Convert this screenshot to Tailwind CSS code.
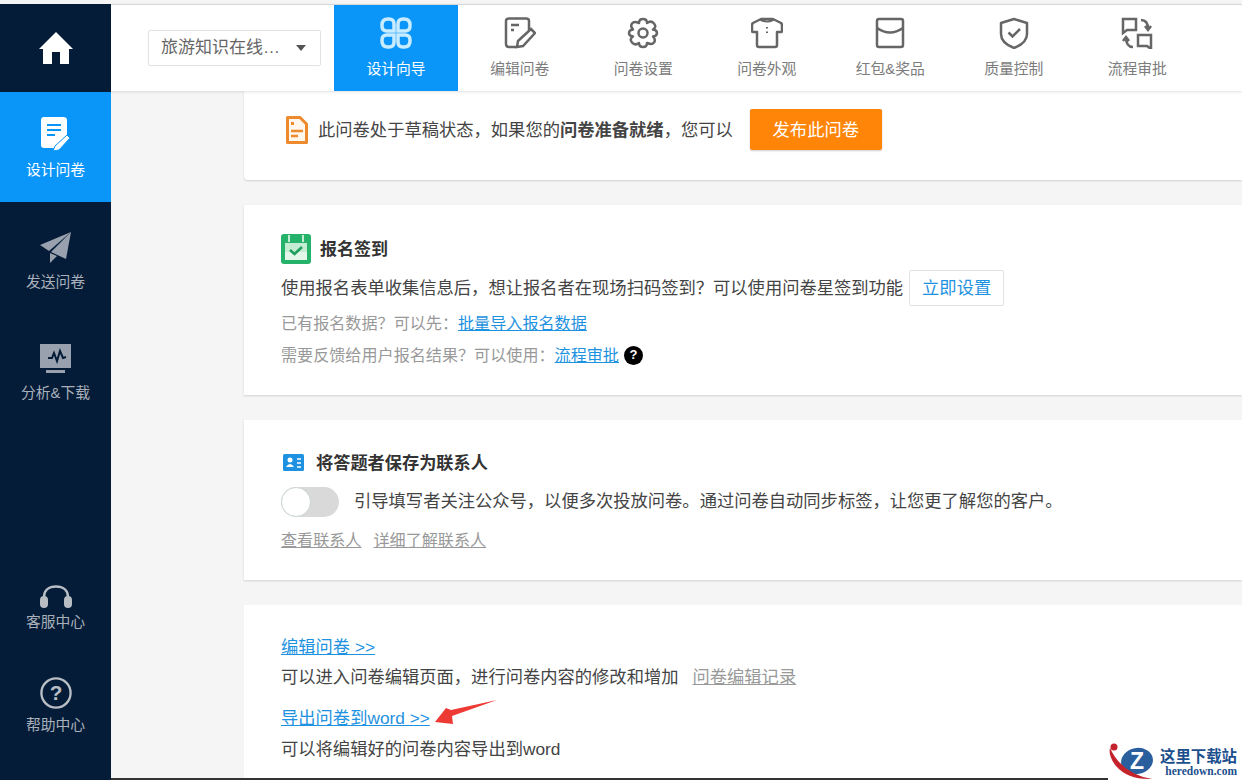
<!DOCTYPE html>
<html lang="zh-CN">
<head>
    <meta charset="UTF-8">
    <title>设计向导</title>
    <script src="https://cdn.jsdelivr.net/npm/@tailwindcss/browser@4"></script>
</head>
<body class="bg-[#f5f5f5] font-['Liberation_Sans','Noto_Sans_CJK_SC',sans-serif]">
<div class="relative w-[1242px] h-[780px] overflow-hidden pt-[4px] flex">

    <!-- Sidebar -->
    <aside class="w-[111px] h-[776px] shrink-0 bg-[#041c38] flex flex-col text-[14.8px] text-[#a9b0ba]">
        <div class="h-[88px] flex items-center justify-center">
            <svg width="34" height="34" viewBox="0 0 34 34" fill="#fff"><path d="M17 1 L34 18 L30 18 L30 33 L21 33 L21 21 L13 21 L13 33 L4 33 L4 18 L0 18 Z"/></svg>
        </div>
        <div class="h-[110px] bg-[#0a95f9] text-white flex flex-col items-center pt-[25px]">
            <svg width="30" height="35" viewBox="0 0 30 35">
                <path d="M3 0H22Q26 0 26 3V20L15 31H3Q0 31 0 28V3Q0 0 3 0Z" fill="#fff"/>
                <path d="M6 8H20M6 13H20M6 18H14" stroke="#0a95f9" stroke-width="2"/>
                <path d="M26 18L29 21L18 33L12 34L14 29Z" fill="#fff" stroke="#0a95f9" stroke-width="1"/>
            </svg>
            <span class="mt-[8px] leading-[20px]">设计问卷</span>
        </div>
        <div class="h-[111px] flex flex-col items-center pt-[30px]">
            <svg width="32" height="32" viewBox="0 0 32 32" fill="#98a1ad">
                <path d="M31 0L0 13L9 19L31 0Z"/><path d="M31 0L11 20L26 27L31 0Z"/><path d="M10 21L10 31L17 24Z"/>
            </svg>
            <span class="mt-[8px] leading-[20px]">发送问卷</span>
        </div>
        <div class="h-[111px] flex flex-col items-center pt-[31px]">
            <svg width="32" height="30" viewBox="0 0 32 30">
                <rect x="0" y="0" width="31" height="24" fill="#98a1ad"/>
                <rect x="6" y="26" width="19" height="3" fill="#98a1ad"/>
                <path d="M8 14L12 14L14 9L17 17L20 7L23 14L26 13" fill="none" stroke="#041c38" stroke-width="2"/>
            </svg>
            <span class="mt-[9px] leading-[20px]">分析&amp;下载</span>
        </div>
        <div class="flex-1"></div>
        <div class="h-[92px] flex flex-col items-center">
            <svg width="32" height="24" viewBox="0 0 32 24" fill="#b9bec5">
                <path d="M4 15V12C4 5 9 1.500 16 1.500S28 5 28 12V15" fill="none" stroke="#b9bec5" stroke-width="2.500"/>
                <rect x="0" y="11" width="8" height="12" rx="4"/><rect x="24" y="11" width="8" height="12" rx="4"/>
            </svg>
            <span class="mt-[3px] leading-[20px]">客服中心</span>
        </div>
        <div class="h-[103px] flex flex-col items-center">
            <svg width="32" height="32" viewBox="0 0 34 34">
                <circle cx="17" cy="17" r="15.500" fill="none" stroke="#b9bec5" stroke-width="2.500"/>
                <text x="17" y="24.500" text-anchor="middle" font-size="22" font-weight="700" fill="#b9bec5" font-family="Liberation Sans">?</text>
            </svg>
            <span class="mt-[6px] leading-[20px]">帮助中心</span>
        </div>
    </aside>

    <!-- Right part -->
    <div class="flex-1 min-w-0 flex flex-col">
        <header class="relative z-10 h-[87px] shrink-0 bg-white border-t border-[#d8d8d8] shadow-[0_1px_3px_rgba(0,0,0,0.12)] flex">
            <div class="w-[223px] shrink-0 pl-[37px] pt-[25px]">
                <div class="w-[173px] h-[36px] border border-[#e3e3e3] rounded-[2px] shadow-[0_0_2px_rgba(0,0,0,0.06)] flex items-center pl-[12px] text-[17px] text-[#666]">
                    <span class="whitespace-nowrap">旅游知识在线…</span>
                    <span class="ml-[16px] w-0 h-0 border-x-[5px] border-x-transparent border-t-[6px] border-t-[#555]"></span>
                </div>
            </div>
            <nav class="flex text-[14.8px] text-[#7c7c7c]">
                <a class="w-[124px] bg-[#0a95f9] text-white flex flex-col items-center pt-[12px]">
                    <svg width="32" height="32" viewBox="0 0 32 32" fill="none" stroke="#c8ecff" stroke-width="3.500">
                        <path d="M8 2H9Q14 2 14 7V14H7Q2 14 2 9V8Q2 2 8 2Z"/>
                        <path d="M24 2H23Q18 2 18 7V14H25Q30 14 30 9V8Q30 2 24 2Z"/>
                        <path d="M8 30H9Q14 30 14 25V18H7Q2 18 2 23V24Q2 30 8 30Z"/>
                        <path d="M24 30H23Q18 30 18 25V18H25Q30 18 30 23V24Q30 30 24 30Z"/>
                    </svg>
                    <span class="mt-[10px] leading-[20px]">设计向导</span>
                </a>
                <a class="w-[123.500px] flex flex-col items-center pt-[12px]">
                    <svg width="32" height="32" viewBox="0 0 32 32" fill="none" stroke="#666" stroke-width="2.500">
                        <path d="M12 30H5Q2 30 2 27V4Q2 1.500 5 1.500H22Q25 1.500 25 4V13"/>
                        <path d="M7 8H15M7 13H10"/>
                        <path d="M27 12L31 16L19 29L13 30L14 24Z"/>
                    </svg>
                    <span class="mt-[10px] leading-[20px]">编辑问卷</span>
                </a>
                <a class="w-[123.500px] flex flex-col items-center pt-[12px]">
                    <svg width="32" height="32" viewBox="0 0 32 32" fill="none" stroke="#666" stroke-width="2.500" stroke-linejoin="round">
                        <path d="M12 6Q12 2 16 2T20 6Q24 3 27 6.500T26 12.500Q30 13 30 16T26 19.500Q29 23 27 25.500T20 26Q20 30 16 30T12 26Q8 29 5 25.500T6 19.500Q2 19 2 16T6 12.500Q3 9 5 6.500T12 6Z"/>
                        <circle cx="16" cy="16" r="4.500"/>
                    </svg>
                    <span class="mt-[10px] leading-[20px]">问卷设置</span>
                </a>
                <a class="w-[123.500px] flex flex-col items-center pt-[12px]">
                    <svg width="32" height="32" viewBox="0 0 32 32" fill="none" stroke="#666" stroke-width="2.500" stroke-linejoin="round">
                        <path d="M10 2H22L30 6Q31 7 31 8V14Q31 15 30 15H26V28Q26 30 24 30H8Q6 30 6 28V15H2Q1 15 1 14V8Q1 7 2 6Z"/>
                        <path d="M10 2V3Q16 6 22 3V2" stroke-width="2"/>
                        <path d="M16 10V11.500M16 14.500V16" stroke-width="2"/>
                    </svg>
                    <span class="mt-[10px] leading-[20px]">问卷外观</span>
                </a>
                <a class="w-[123.500px] flex flex-col items-center pt-[12px]">
                    <svg width="32" height="32" viewBox="0 0 32 32" fill="none" stroke="#666" stroke-width="2.500">
                        <rect x="3" y="2" width="26" height="28" rx="2"/>
                        <path d="M3 11Q16 20 29 11"/>
                    </svg>
                    <span class="mt-[10px] leading-[20px]">红包&amp;奖品</span>
                </a>
                <a class="w-[123.500px] flex flex-col items-center pt-[12px]">
                    <svg width="32" height="32" viewBox="0 0 32 32" fill="none" stroke="#666" stroke-width="2.500">
                        <path d="M16 2L29 6V17Q29 26 16 31Q3 26 3 17V6Z" stroke-linejoin="round"/>
                        <path d="M10.500 15.500L14.500 19.500L22 12"/>
                    </svg>
                    <span class="mt-[10px] leading-[20px]">质量控制</span>
                </a>
                <a class="w-[123.500px] flex flex-col items-center pt-[12px]">
                    <svg width="32" height="32" viewBox="0 0 32 32" fill="none" stroke="#666" stroke-width="2.500">
                        <path d="M2 2H15V13H6L2 16Z"/>
                        <path d="M30 18H17V29H26L30 32Z"/>
                        <path d="M20 3Q27 3 27 12M24 9L27 13L30 9"/>
                        <path d="M12 30Q5 30 5 20M2 24L5 20L8 24"/>
                    </svg>
                    <span class="mt-[10px] leading-[20px]">流程审批</span>
                </a>
            </nav>
        </header>

        <main class="flex-1 min-h-0 pl-[133px] flex flex-col gap-[25px] border-b-2 border-[#333] text-[17.300px] text-[#444]">
            <!-- draft -->
            <section class="h-[89px] shrink-0 bg-white rounded-bl-[4px] shadow-[0_1px_2px_rgba(0,0,0,0.15)] pl-[42px] pt-[18px] flex items-start">
                <svg class="mt-[7px]" width="22" height="28" viewBox="0 0 22 28">
                    <path d="M1.500 1.500H14L20.500 8V26.500H1.500Z" fill="#fff6ec" stroke="#ee8a2e" stroke-width="3" stroke-linejoin="round"/>
                    <path d="M5 15H17M5 20H12" stroke="#ee8a2e" stroke-width="2.500"/><rect x="5" y="6" width="3" height="3" fill="#ee8a2e"/>
                </svg>
                <p class="ml-[10px] pt-[1px] leading-[41px]">此问卷处于草稿状态，如果您的<b class="font-bold">问卷准备就绪</b>，您可以</p>
                <button class="ml-[17px] w-[132px] h-[41px] pt-[2px] bg-[#ff8508] rounded-[2px] text-white text-[17.300px] shadow-[0_1px_2px_rgba(0,0,0,0.2)]">发布此问卷</button>
            </section>

            <!-- sign in -->
            <section class="h-[190px] shrink-0 bg-white shadow-[0_1px_2px_rgba(0,0,0,0.15)] pl-[37px] pt-[29px]">
                <div class="flex items-center h-[29px]">
                    <svg width="30" height="30" viewBox="0 0 30 30">
                        <rect width="30" height="30" rx="3" fill="#25b36b"/>
                        <rect x="4" y="9" width="22" height="17" fill="#c4ecd3"/>
                        <rect x="4" y="18" width="22" height="8" fill="#e3f6ea"/>
                        <path d="M8 1V8M22 1V8" stroke="#c4ecd3" stroke-width="2"/>
                        <path d="M9 16L13.500 20L21 13" fill="none" stroke="#1d9f5c" stroke-width="2.500"/>
                    </svg>
                    <h2 class="ml-[9px] pt-[2px] font-bold text-[#333] text-[17px]">报名签到</h2>
                </div>
                <div class="flex items-center mt-[7px] h-[36px]">
                    <span class="pt-[2px]">使用报名表单收集信息后，想让报名者在现场扫码签到？可以使用问卷星签到功能</span>
                    <a class="ml-[6px] w-[95px] h-[36px] pt-[2px] border border-[#e3e3e3] rounded-[2px] flex items-center justify-center text-[#1e92e0]">立即设置</a>
                </div>
                <p class="mt-[1px] leading-[32px] text-[16.100px] text-[#999]">已有报名数据？可以先：<a class="text-[#1e92e0] underline">批量导入报名数据</a></p>
                <p class="leading-[32px] text-[16.100px] text-[#999] flex items-center">需要反馈给用户报名结果？可以使用：<a class="text-[#1e92e0] underline">流程审批</a>
                    <span class="ml-[5px] w-[19px] h-[19px] rounded-full bg-black text-white text-[13px] font-bold flex items-center justify-center">?</span>
                </p>
            </section>

            <!-- contacts -->
            <section class="h-[160px] shrink-0 bg-white shadow-[0_1px_2px_rgba(0,0,0,0.15)] pl-[37px] pt-[30px]">
                <div class="flex items-center h-[24px]">
                    <svg class="ml-[2px]" width="21" height="17" viewBox="0 0 21 17">
                        <rect width="21" height="17" rx="1.500" fill="#1e92e0"/>
                        <circle cx="7" cy="6" r="2.500" fill="#fff"/><path d="M3 13Q7 7 11 13Z" fill="#fff"/>
                        <path d="M14 5H18M14 9H18M14 13H18" stroke="#fff" stroke-width="1.500"/>
                    </svg>
                    <h2 class="ml-[12px] pt-[3px] font-bold text-[#333] text-[17.200px]">将答题者保存为联系人</h2>
                </div>
                <div class="flex items-center mt-[13px] h-[30px]">
                    <span class="relative w-[58px] h-[30px] rounded-full bg-[#d9d9d9]">
                        <span class="absolute left-0 top-0 w-[30px] h-[30px] rounded-full bg-white border border-[#ccd5d8]"></span>
                    </span>
                    <span class="ml-[15px]">引导填写者关注公众号，以便多次投放问卷。通过问卷自动同步标签，让您更了解您的客户。</span>
                </div>
                <p class="mt-[7px] leading-[32px] text-[16.100px] text-[#999] flex gap-[12px]"><a class="underline">查看联系人</a><a class="underline">详细了解联系人</a></p>
            </section>

            <!-- edit -->
            <section class="flex-1 bg-white pl-[37px] pt-[27px]">
                <a class="block leading-[31px] text-[#1e92e0] underline">编辑问卷 &gt;&gt;</a>
                <p class="leading-[28px] flex">可以进入问卷编辑页面，进行问卷内容的修改和增加<a class="ml-[14px] text-[#999] underline">问卷编辑记录</a></p>
                <a class="block mt-[11px] leading-[32px] text-[#1e92e0] underline">导出问卷到word &gt;&gt;</a>
                <p class="mt-[1px] leading-[28px]">可以将编辑好的问卷内容导出到word</p>
            </section>
        </main>
    </div>

    <!-- Red annotation arrow -->
    <svg class="absolute left-[430px] top-[696px]" width="70" height="32" viewBox="0 0 70 32">
        <path d="M67 4L22 20L23 28L5 26L16 12L21 14Z" fill="#ee3a35"/>
    </svg>

    <!-- Watermark -->
    <div class="absolute left-[1108px] top-[742px] w-[134px] h-[38px] bg-white flex">
        <svg class="shrink-0" width="50" height="38" viewBox="0 0 50 38">
            <ellipse cx="29" cy="19" rx="16" ry="13" fill="#2a5f9e" transform="rotate(-10 29 19)"/>
            <path d="M2 6Q14 32 44 37Q20 38 8 24Q0 14 2 6Z" fill="#c5232c"/>
            <circle cx="6" cy="5" r="3.500" fill="#c5232c"/>
            <text x="29" y="27" text-anchor="middle" font-size="23" font-weight="700" fill="#fff" font-family="Liberation Sans">Z</text>
        </svg>
        <div class="ml-[2px] flex flex-col items-end whitespace-nowrap text-[#1c4f8e] font-bold">
            <span class="text-[15.400px] leading-[16px] mt-[7px]">这里下载站</span>
            <span class="text-[11.500px] leading-[12px] font-['Liberation_Serif',serif]">heredown.com</span>
        </div>
    </div>
</div>
</body>
</html>
